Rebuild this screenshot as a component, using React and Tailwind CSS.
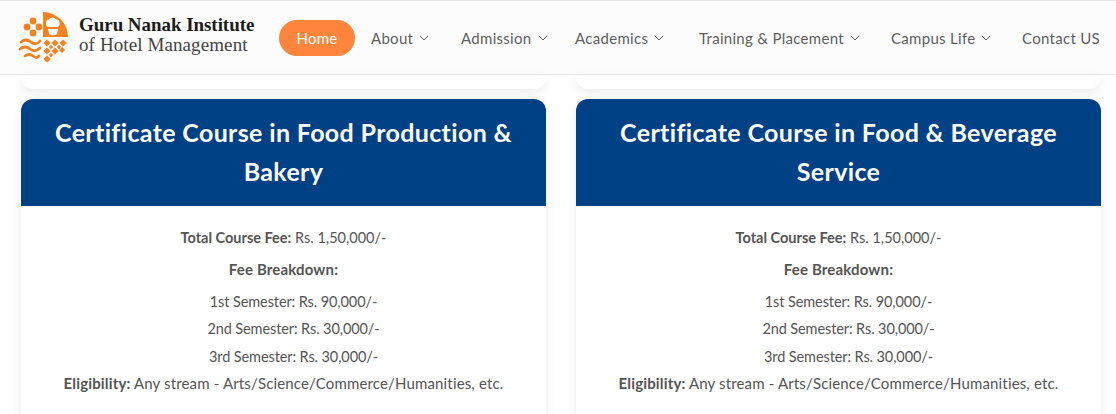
import { ChevronDown } from 'lucide-react';

const navItems = [
  { label: 'About', width: 'w-[90px]' },
  { label: 'Admission', width: 'w-[114px]' },
  { label: 'Academics', width: 'w-[124px]' },
  { label: 'Training & Placement', width: 'w-[192px]' },
  { label: 'Campus Life', width: 'w-[131px]' },
];

const courses = [
  { title: 'Certificate Course in Food Production & Bakery' },
  { title: 'Certificate Course in Food & Beverage Service' },
];

const semesters = [
  '1st Semester: Rs. 90,000/-',
  '2nd Semester: Rs. 30,000/-',
  '3rd Semester: Rs. 30,000/-',
];

function Logo() {
  const dots = [
    [29, 31, 3.6], [37, 31, 3.6], [45, 31, 3.6],
    [33, 35, 2.2], [41, 35, 2.2],
    [29, 39, 3.6], [37, 39, 3.6], [44, 38, 3],
    [33, 43, 2.2],
    [29, 47, 3.6],
  ];

  return (
    <svg width="52" height="52" viewBox="0 0 52 52" className="shrink-0">
      {/* Flower */}
      <g fill="#f58220">
        <circle cx="15" cy="9" r="3.4" />
        <circle cx="9" cy="15" r="3.4" />
        <circle cx="21" cy="15" r="3.4" />
        <circle cx="15" cy="21" r="3.4" />
      </g>
      {/* Quarter disc with chef hat */}
      <path d="M25 0 A25 25 0 0 1 50 25 L25 25 Z" fill="#f58220" />
      <path d="M28 11 a3 3 0 0 1 3 -3.5 a4 4 0 0 1 7 0 a3 3 0 0 1 3.5 3.5 a3 3 0 0 1 -3 4 L31 15 a3 3 0 0 1 -3 -4 Z" fill="#fff" />
      <path d="M30 17 H40 L39 22 Q35 24.5 31 22 Z" fill="#fff" />
      {/* Waves */}
      <g fill="none" stroke="#f58220" strokeWidth="2.8" strokeLinecap="round">
        <path d="M3 30 q5 -4 10 0 t9 -1" />
        <path d="M2 37 q5 -4 10 0 t10 -1" />
        <path d="M7 44 q4 -3 8 0 t6 0" />
      </g>
      {/* Diamonds */}
      <g fill="#f58220">
        {dots.map(([x, y, r]) => (
          <path key={`${x}-${y}`} d={`M${x} ${y - r} L${x + r} ${y} L${x} ${y + r} L${x - r} ${y} Z`} />
        ))}
      </g>
    </svg>
  );
}

function Header() {
  return (
    <header className="h-[75px] flex items-center bg-[#fcfcfc] border-t border-b border-[#e8e8e8] pl-[18px]">
      <Logo />
      <div className="ml-[9px] w-[200px] shrink-0 mb-[5px] font-['Liberation_Serif',serif]">
        <div className="text-[19px] leading-[20px] tracking-[-0.05px] font-bold text-[#1c1c1c] whitespace-nowrap">Guru Nanak Institute</div>
        <div className="text-[19px] leading-[20px] tracking-[0.1px] text-[#444] whitespace-nowrap">of Hotel Management</div>
      </div>
      <nav className="flex items-center shrink-0 text-[15px] tracking-[0.3px] text-[#5f5f5f]">
        <a className="w-[76px] h-[36px] mr-[16px] pt-[1px] rounded-full bg-[#ff843c] text-white flex items-center justify-center">Home</a>
        {navItems.map((item) => (
          <a key={item.label} className={`${item.width} pt-[1px] flex items-center gap-[3px] whitespace-nowrap`}>
            {item.label}
            <ChevronDown size={16} strokeWidth={1.5} />
          </a>
        ))}
        <a className="pt-[1px] whitespace-nowrap">Contact US</a>
      </nav>
    </header>
  );
}

function CourseCard({ title }) {
  return (
    <div className="rounded-xl bg-white shadow-[0_4px_12px_rgba(0,0,0,0.08)] overflow-hidden">
      <h2 className="h-[107px] bg-[#004085] text-white text-[25px] tracking-[0.35px] leading-[39px] font-bold text-center px-[30px] pt-[14px]">
        {title}
      </h2>
      <div className="pt-[18px] pb-[40px] text-center text-[15px] tracking-[0.15px] text-[#555]">
        <p className="leading-[28px] text-[14.5px] tracking-normal"><b>Total Course Fee:</b> Rs. 1,50,000/-</p>
        <p className="leading-[28px] mt-[3px] mb-[4.5px] font-bold">Fee Breakdown:</p>
        <div className="pl-[20px] text-[14.5px] tracking-[-0.1px]">
          {semesters.map((row) => (
            <p key={row} className="leading-[27.5px]">{row}</p>
          ))}
        </div>
        <p className="leading-[27px]"><b>Eligibility:</b> Any stream - Arts/Science/Commerce/Humanities, etc.</p>
      </div>
    </div>
  );
}

export default function App() {
  return (
    <div className="h-[414px] w-[1116px] overflow-hidden bg-white font-['Lato',sans-serif]">
      <Header />
      <main className="pl-[21px] pr-[15px] grid grid-cols-[525px_525px] gap-x-[30px]">
        <div className="h-[14px] rounded-b-xl bg-white shadow-[0_4px_12px_rgba(0,0,0,0.08)]" />
        <div className="h-[14px] rounded-b-xl bg-white shadow-[0_4px_12px_rgba(0,0,0,0.08)]" />
        {courses.map((course) => (
          <div key={course.title} className="mt-[10px]">
            <CourseCard title={course.title} />
          </div>
        ))}
      </main>
    </div>
  );
}
